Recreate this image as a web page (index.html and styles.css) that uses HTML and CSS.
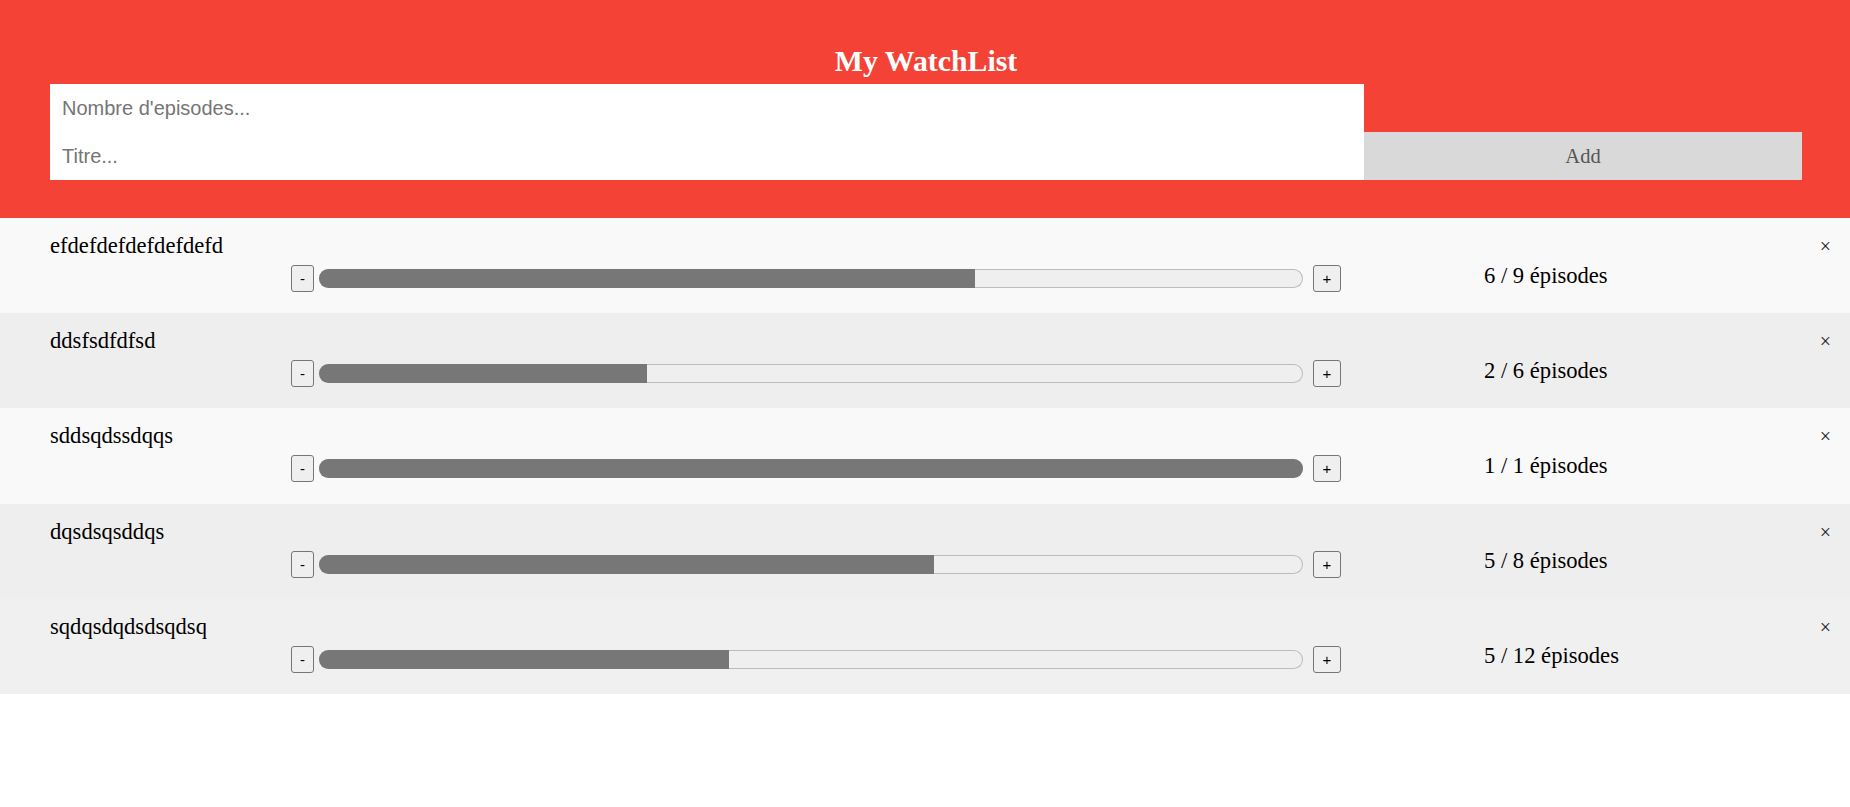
FILE: index.html
```html
<!DOCTYPE html>
<html lang="fr">
<head>
<meta charset="utf-8">
<title>My WatchList</title>
<link rel="stylesheet" href="styles.css">
</head>
<body>
<div class="header">
  <h1 class="title">My WatchList</h1>
  <div class="form">
    <input class="field field-a" type="text" placeholder="Nombre d'episodes...">
    <input class="field field-b" type="text" placeholder="Titre...">
    <span class="add">Add</span>
  </div>
</div>
<ul class="list">
  <li class="item">
    <div class="line1"><span class="name">efdefdefdefdefdefd</span><span class="close">×</span></div>
    <div class="line2">
      <button class="btn btn-minus">-</button>
      <div class="track"><div class="fill" style="width:66.667%"></div></div>
      <button class="btn btn-plus">+</button>
      <span class="count">6 / 9 épisodes</span>
    </div>
  </li>
  <li class="item">
    <div class="line1"><span class="name">ddsfsdfdfsd</span><span class="close">×</span></div>
    <div class="line2">
      <button class="btn btn-minus">-</button>
      <div class="track"><div class="fill" style="width:33.333%"></div></div>
      <button class="btn btn-plus">+</button>
      <span class="count">2 / 6 épisodes</span>
    </div>
  </li>
  <li class="item">
    <div class="line1"><span class="name">sddsqdssdqqs</span><span class="close">×</span></div>
    <div class="line2">
      <button class="btn btn-minus">-</button>
      <div class="track"><div class="fill" style="width:100%"></div></div>
      <button class="btn btn-plus">+</button>
      <span class="count">1 / 1 épisodes</span>
    </div>
  </li>
  <li class="item">
    <div class="line1"><span class="name">dqsdsqsddqs</span><span class="close">×</span></div>
    <div class="line2">
      <button class="btn btn-minus">-</button>
      <div class="track"><div class="fill" style="width:62.5%"></div></div>
      <button class="btn btn-plus">+</button>
      <span class="count">5 / 8 épisodes</span>
    </div>
  </li>
  <li class="item item-hover">
    <div class="line1"><span class="name">sqdqsdqdsdsqdsq</span><span class="close">×</span></div>
    <div class="line2">
      <button class="btn btn-minus">-</button>
      <div class="track"><div class="fill" style="width:41.667%"></div></div>
      <button class="btn btn-plus">+</button>
      <span class="count">5 / 12 épisodes</span>
    </div>
  </li>
</ul>
</body>
</html>
```

FILE: styles.css
```css
html, body {
  margin: 0;
  padding: 0;
  background: #ffffff;
  font-family: "Liberation Serif", "Times New Roman", serif;
}

.header {
  background: #f44336;
  padding: 44px 48px 38px 50px;
  color: #ffffff;
}

.title {
  margin: 0 0 6px 0;
  text-align: center;
  font-size: 29.8px;
  line-height: 34px;
  font-weight: bold;
}

.form {
  display: grid;
  grid-template-columns: 75% 25%;
  grid-template-rows: 48px 48px;
}

.field {
  box-sizing: border-box;
  height: 48px;
  margin: 0;
  border: none;
  border-radius: 0;
  outline: none;
  padding: 0 12px;
  font-family: "Liberation Sans", Arial, sans-serif;
  font-size: 20px;
  color: #000;
  background: #ffffff;
}

.field::placeholder {
  color: #757575;
}

.field-a {
  grid-column: 1;
  grid-row: 1;
}

.field-b {
  grid-column: 1;
  grid-row: 2;
}

.add {
  grid-column: 2;
  grid-row: 2;
  display: flex;
  align-items: center;
  justify-content: center;
  background: #d9d9d9;
  color: #555555;
  font-size: 20.5px;
  font-family: "Liberation Serif", "Times New Roman", serif;
}

.list {
  margin: 0;
  padding: 0;
  list-style: none;
}

.item {
  box-sizing: border-box;
  height: 95.2px;
  padding: 15px 0 0 50px;
  background: #f9f9f9;
  font-size: 22.6px;
  color: #000;
}

.item:nth-child(even) {
  background: #eeeeee;
}

.item-hover {
  background: #f0f0f0;
}

.line1 {
  display: flex;
  align-items: center;
  justify-content: space-between;
  height: 26px;
  line-height: 26px;
}

.close {
  font-size: 20px;
  padding-right: 19px;
  color: #222;
}

.line2 {
  display: flex;
  align-items: center;
  height: 27px;
  margin-top: 6px;
  padding-left: 241px;
}

.btn {
  box-sizing: border-box;
  height: 27px;
  padding: 0;
  margin: 0;
  border: 1px solid #767676;
  border-radius: 3px;
  background: #efefef;
  color: #000;
  font-family: "Liberation Sans", Arial, sans-serif;
  font-size: 15px;
  line-height: 25px;
  text-align: center;
}

.btn-minus {
  width: 23px;
}

.btn-plus {
  width: 28px;
}

.track {
  width: 984px;
  height: 19px;
  margin: 0 10px 0 5px;
  border-radius: 10px;
  overflow: hidden;
  background: #efefef;
  box-shadow: inset 0 0 0 1px #bcbcbc;
}

.fill {
  height: 100%;
  background: #777777;
}

.count {
  margin-left: 143px;
  margin-bottom: 6px;
  line-height: 26px;
}
```
